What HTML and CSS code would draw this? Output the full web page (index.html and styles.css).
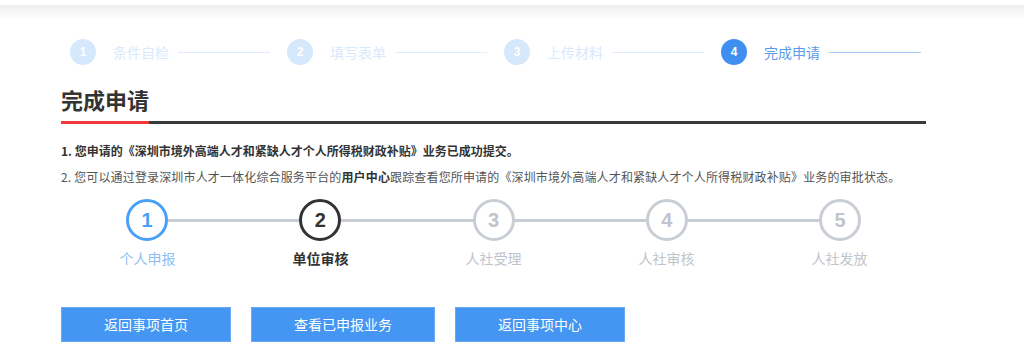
FILE: index.html
```html
<!DOCTYPE html>
<html lang="zh-CN">
<head>
<meta charset="utf-8">
<title>完成申请</title>
<link rel="stylesheet" href="styles.css">
</head>
<body>
<div class="topbar"></div>
<div class="wrap">
  <!-- wizard steps -->
  <div class="steps">
    <div class="step"><span class="dot">1</span><span class="name">条件自检</span><span class="bar"></span></div>
    <div class="step"><span class="dot">2</span><span class="name">填写表单</span><span class="bar"></span></div>
    <div class="step"><span class="dot">3</span><span class="name">上传材料</span><span class="bar"></span></div>
    <div class="step cur"><span class="dot">4</span><span class="name">完成申请</span><span class="bar"></span></div>
  </div>

  <div class="title"><span>完成申请</span></div>

  <p class="msg bold">1. 您申请的《深圳市境外高端人才和紧缺人才个人所得税财政补贴》业务已成功提交。</p>
  <p class="msg second">2. 您可以通过登录深圳市人才一体化综合服务平台的<b>用户中心</b>跟踪查看您所申请的《深圳市境外高端人才和紧缺人才个人所得税财政补贴》业务的审批状态。</p>

  <!-- approval progress -->
  <div class="track">
    <span class="node done">1</span><span class="link"></span>
    <span class="node now">2</span><span class="link"></span>
    <span class="node">3</span><span class="link"></span>
    <span class="node">4</span><span class="link"></span>
    <span class="node">5</span>
  </div>
  <div class="labels">
    <span class="done">个人申报</span>
    <span class="now">单位审核</span>
    <span>人社受理</span>
    <span>人社审核</span>
    <span>人社发放</span>
  </div>

  <div class="btns">
    <a class="btn">返回事项首页</a>
    <a class="btn">查看已申报业务</a>
    <a class="btn">返回事项中心</a>
  </div>
</div>
</body>
</html>
```

FILE: styles.css
```css
* { box-sizing: border-box; }
body { margin: 0; background: #fff; color: #333;
       font-family: "Noto Sans CJK SC", "Liberation Sans", sans-serif; }

.topbar { height: 20px;
          background: linear-gradient(#fff 0, #fff 5px, #eeeeee 5px, #fff 20px); }

.wrap { margin-left: 61px; width: 865px; }

/* wizard steps */
.steps { display: flex; margin: 19px 0 0 9px; height: 26px; align-items: center; }
.step { display: flex; align-items: center; flex: none; white-space: nowrap; }
.dot { width: 26px; height: 26px; flex: none; border-radius: 50%; background: #d5e8fc; color: #fff;
       font: bold 12px/26px "Liberation Sans", sans-serif; text-align: center; }
.name { margin-left: 17px; font-size: 14px; line-height: 20px; color: #dae9fb; }
.bar { width: 92px; height: 1px; flex: none; margin: 0 17px 0 9px; background: #e2edfc; }
.cur .dot { background: #3f8ff0; }
.cur .name { color: #5b9be8; }
.cur .bar { background: #a6cbf6; }

/* heading */
.title { display: flex; margin-top: 19px; border-bottom: 3px solid #3a3a3a; }
.title span { font-size: 22px; font-weight: bold; line-height: 30px; color: #333;
              padding-bottom: 7px; margin-bottom: -3px; border-bottom: 3px solid #f2383c; }

.msg { margin: 17px 0 0; font-size: 12px; line-height: 20px; color: #555; white-space: nowrap; }
.msg.bold { font-weight: bold; color: #333; }
.msg.second { margin-top: 6px; letter-spacing: 0.15px; }
.msg b { color: #333; }

/* progress */
.track { display: flex; align-items: center; padding: 0 65px; margin-top: 12px; }
.node { width: 42px; height: 42px; flex: none; border-radius: 50%; border: 3px solid #c9cdd4;
        color: #c0c4cc; text-align: center; font: bold 20px/36px "Liberation Sans", sans-serif; }
.node.done { border-color: #4aa0f6; color: #4aa0f6; }
.node.now { border-color: #333; color: #333; }
.link { flex: 1; height: 3px; background: #c8ccd3; }

.labels { display: grid; grid-template-columns: repeat(5, 1fr); margin-top: 7px;
          font-size: 14px; line-height: 20px; text-align: center; color: #c0c4cc; }
.labels .done { color: #8dbff4; }
.labels .now { color: #333; font-weight: bold; }

.btns { display: flex; gap: 20px; margin-top: 39px; }
.btn { display: block; height: 35px; padding: 0 42px; line-height: 33px; font-size: 14px;
       color: #fff; background: #4595f2; border: 1px solid #6aa8f3; cursor: pointer; }
```
